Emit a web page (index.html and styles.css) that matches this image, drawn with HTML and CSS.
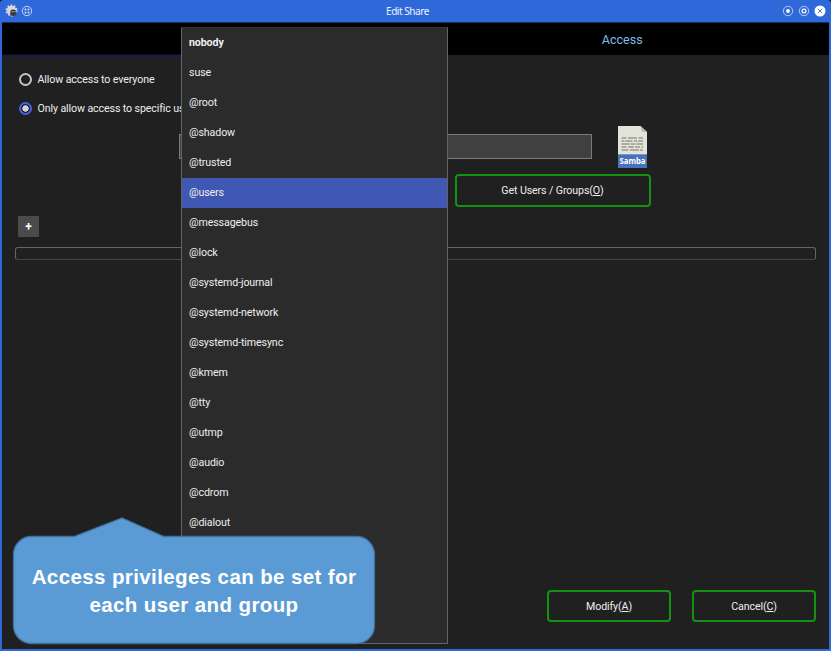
FILE: index.html
```html
<!DOCTYPE html>
<html lang="en">
<head>
<meta charset="utf-8">
<title>Edit Share</title>
<link rel="stylesheet" href="styles.css">
</head>
<body>
<div class="window">
  <header class="titlebar">
    <div class="title-left">
      <svg width="14" height="14" viewBox="0 0 14 14">
        <circle cx="6.5" cy="6.5" r="4.8" fill="#d8d8d8"/>
        <circle cx="6.5" cy="6.5" r="5.2" fill="none" stroke="#d8d8d8" stroke-width="1.6" stroke-dasharray="1.7 1.57"/>
        <circle cx="8.2" cy="8.7" r="3.2" fill="#333b45"/>
        <path d="M5 8.5c2-2 4 0 6-1" stroke="#8c9299" fill="none"/>
      </svg>
      <svg width="12" height="12" viewBox="0 0 12 12">
        <circle cx="6" cy="6" r="4.7" fill="none" stroke="#d5e0fa" stroke-width=".9"/>
        <g fill="#d5e0fa"><circle cx="4.5" cy="4.5" r=".95"/><circle cx="7.5" cy="4.5" r=".95"/><circle cx="4.5" cy="7.5" r=".95"/><circle cx="7.5" cy="7.5" r=".95"/></g>
      </svg>
    </div>
    <h1 class="title">Edit Share</h1>
    <div class="title-right">
      <svg width="12" height="12" viewBox="0 0 12 12"><circle cx="6" cy="6" r="4.7" fill="none" stroke="#c5d4f7" stroke-width=".9"/><circle cx="6" cy="6" r="1.9" fill="#fff"/></svg>
      <svg width="12" height="12" viewBox="0 0 12 12"><circle cx="6" cy="6" r="4.7" fill="none" stroke="#c5d4f7" stroke-width=".9"/><circle cx="6" cy="6" r="1.9" fill="none" stroke="#fff" stroke-width="1.2"/></svg>
      <svg width="12" height="12" viewBox="0 0 12 12"><circle cx="6" cy="6" r="5.5" fill="#fff"/><path d="M3.8 3.8l4.4 4.4M8.2 3.8L3.8 8.2" stroke="#4276de" stroke-width="1"/></svg>
    </div>
  </header>
  <nav class="tabs">
    <div class="tab tab-first"></div>
    <div class="tab">Access</div>
  </nav>
  <main class="content">
    <label class="option"><span class="radio"></span><span class="option-text">Allow access to everyone</span></label>
    <label class="option"><span class="radio checked"></span><span class="option-text">Only allow access to specific us</span></label>
    <div class="picker">
      <div class="field"></div>
      <svg class="samba" width="29" height="42" viewBox="0 0 29 42">
        <path d="M0 0h22.5L29 6v23H0z" fill="#e1e4d6"/>
        <path d="M22.5 0L29 6h-5z" fill="#b8bca9"/>
        <g stroke="#b0aba2" stroke-width="1.8">
          <path d="M3.5 12H25" stroke-dasharray="5 1.5 9 1.5"/>
          <path d="M3.5 15H25" stroke-dasharray="3 1 7 1.5"/>
          <path d="M3.5 18H25" stroke-dasharray="8 1 5 1"/>
          <path d="M3.5 21H25" stroke-dasharray="5 1.5 6 1"/>
          <path d="M3.5 24H25" stroke-dasharray="7 1.5 9 1"/>
        </g>
        <path d="M0 28.5h29V42H0z" fill="#4871bb"/>
        <path d="M0 28.5h29" stroke="#7795c9"/>
        <text x="14.5" y="38" class="samba-label" textLength="26" lengthAdjust="spacingAndGlyphs">Samba</text>
      </svg>
    </div>
    <button class="btn btn-get">Get Users / Groups(<u>O</u>)</button>
    <button class="add">+</button>
    <div class="list"></div>
    <footer class="actions">
      <button class="btn">Modify(<u>A</u>)</button>
      <button class="btn">Cancel(<u>C</u>)</button>
    </footer>
  </main>
  <ul class="menu">
    <li class="current">nobody</li>
    <li>suse</li>
    <li>@root</li>
    <li>@shadow</li>
    <li>@trusted</li>
    <li class="active">@users</li>
    <li>@messagebus</li>
    <li>@lock</li>
    <li>@systemd-journal</li>
    <li>@systemd-network</li>
    <li>@systemd-timesync</li>
    <li>@kmem</li>
    <li>@tty</li>
    <li>@utmp</li>
    <li>@audio</li>
    <li>@cdrom</li>
    <li>@dialout</li>
  </ul>
  <div class="callout">
    <svg class="callout-shape" width="364" height="129" viewBox="0 0 364 129">
      <path d="M19.5 20.5H62L110 2L152 20.500H344.500a18 18 0 0 1 18 18V109.500a18 18 0 0 1-18 18H19.500a18 18 0 0 1-18-18V38.500a18 18 0 0 1 18-18z" fill="#5b9bd5" stroke="#41719c" stroke-width="1.300"/>
    </svg>
    <p class="callout-text">Access privileges can be set for<br>each user and group</p>
  </div>
</div>
</body>
</html>
```

FILE: styles.css
```css
* { box-sizing: border-box; }
body {
  margin: 0;
  background: #000;
  font: 10.670px/14px Roboto, "Liberation Sans", sans-serif;
  letter-spacing: -.120px;
  color: #eee;
}
.window {
  position: relative;
  display: flex;
  flex-direction: column;
  width: 831px;
  height: 651px;
  overflow: hidden;
  border: 2px solid #2f69d9;
  border-top: 0;
  border-radius: 3px 3px 0 0;
  background: #202020;
}
.titlebar {
  display: grid;
  grid-template-columns: 1fr auto 1fr;
  align-items: center;
  height: 23px;
  padding: 0 3px 0 3px;
  background: #2f69d9;
  border-bottom: 1px solid #142e66;
}
.title {
  margin: 0 0 0 -16px;
  font: 10px/14px "Noto Sans", sans-serif;
  letter-spacing: -.450px;
  color: #eef3ff;
}
.title-left, .title-right { display: flex; align-items: center; gap: 2px; }
.title-right { justify-content: flex-end; gap: 4px; }
.title-left svg, .title-right svg { display: block; }
.tabs {
  display: flex;
  height: 32px;
  background: #000;
}
.tab {
  flex: 1;
  text-align: center;
  font-size: 12.500px;
  line-height: 33px;
  letter-spacing: 0;
  color: #80bcec;
}
.tab-first { border-bottom: 1px solid #00005e; }
.content {
  flex: 1;
  display: flex;
  flex-direction: column;
  padding: 17px 13px 27px;
}
.option {
  display: flex;
  align-items: center;
  gap: 5.500px;
  width: 162px;
  height: 14px;
  margin: 0 0 15px 4px;
}
.option-text {
  padding-top: 1px;
  white-space: nowrap;
}
.radio {
  flex: none;
  width: 13px;
  height: 13px;
  border: 2px solid #c4c4c4;
  border-radius: 50%;
}
.radio.checked {
  border-color: #4560ef;
  background: radial-gradient(circle, #d2d2d2 2.900px, transparent 3.500px);
}
.picker {
  display: flex;
  align-items: flex-start;
  gap: 26px;
  margin: -4px 0 0 164px;
  height: 42px;
}
.field {
  width: 413px;
  height: 25px;
  margin-top: 8px;
  border: 1px solid #7b7b7b;
  background: #404040;
}
.samba-label {
  font: bold 8.500px "Noto Sans", sans-serif;
  letter-spacing: 0;
  text-anchor: middle;
  fill: #fff;
}
.btn {
  width: 124px;
  height: 32px;
  padding: 1px 0 0;
  border: 2px solid #139213;
  border-radius: 4px;
  background: transparent;
  color: #eee;
  font: inherit;
  letter-spacing: inherit;
}
.btn-get { width: 196px; height: 33px; margin: 6px 0 0 439.500px; padding: 0; }
.add {
  width: 21px;
  height: 21px;
  margin: 9px 0 0 3px;
  padding: 0;
  border: 0;
  background: #4b4b4b;
  color: #fff;
  font: bold 12px/22px Roboto, sans-serif;
}
.list {
  height: 13px;
  margin-top: 10px;
  border: 1px solid #666;
  border-bottom-color: #444;
  border-radius: 3px;
}
.actions {
  display: flex;
  justify-content: flex-end;
  gap: 21px;
  margin-top: auto;
}
.menu {
  position: absolute;
  left: 179px;
  top: 27px;
  width: 267px;
  height: 617px;
  margin: 0;
  padding: 0;
  list-style: none;
  background: #2b2b2b;
  border: 1px solid #646464;
  border-top-color: #333;
}
.menu li {
  height: 30px;
  padding-left: 7px;
  line-height: 30px;
}
.menu .current { font-weight: bold; }
.menu .active { background: #4057b3; }
.callout {
  position: absolute;
  left: 10px;
  top: 516px;
  width: 364px;
  height: 129px;
}
.callout-shape { display: block; }
.callout-text {
  position: absolute;
  inset: 47px 0 auto;
  margin: 0;
  text-align: center;
  font: bold 20.500px/28px "Liberation Sans", Arial, sans-serif;
  letter-spacing: .390px;
  color: #fff;
}
```
